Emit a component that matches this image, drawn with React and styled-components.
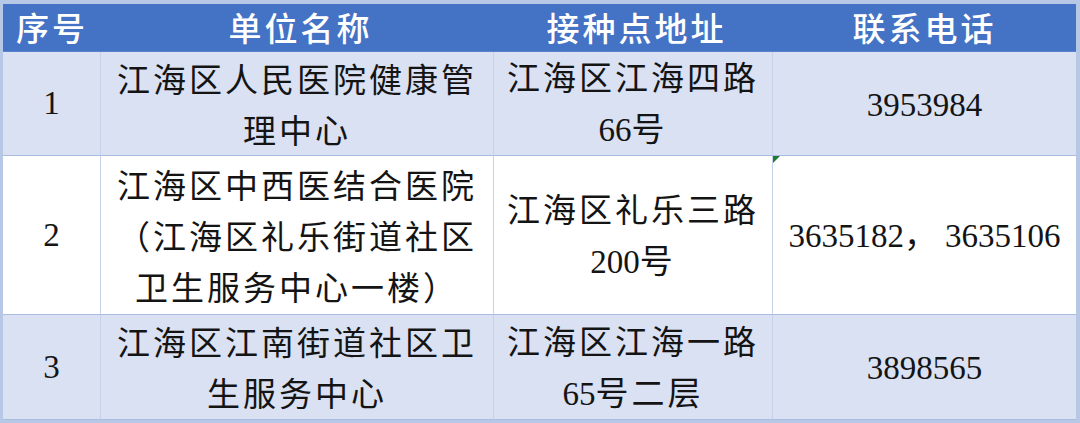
import React from "react";
import styled, { createGlobalStyle } from "styled-components";

const Global = createGlobalStyle`
  html, body { margin: 0; padding: 0; background: #ffffff; }
`;

const Frame = styled.div`
  width: 1080px;
  height: 423px;
  box-sizing: border-box;
  border-style: solid;
  border-color: #b7c8e6;
  border-width: 4px 4px 3px 3px;
  background: #d9e1f2;
  font-family: "Liberation Serif", "Noto Sans CJK SC", serif;
`;

const Table = styled.div`
  display: grid;
  grid-template-columns: 98px 393px 279px 303px;
  grid-template-rows: 48px 104px 159px 105px;
  width: 100%;
  height: 100%;
`;

const HeadCell = styled.div`
  background: #4472c4;
  color: #ffffff;
  display: flex;
  align-items: center;
  justify-content: center;
  font-family: "Noto Sans CJK SC", sans-serif;
  font-size: 33px;
  letter-spacing: 3px;
  font-weight: 500;
  line-height: 1;
  padding-left: ${(p) => p.$shift || 0}px;
  box-sizing: border-box;
  border-bottom: 1px solid #5a83cc;
`;

const Cell = styled.div`
  position: relative;
  box-sizing: border-box;
  background: ${(p) => (p.$white ? "#ffffff" : "#d9e1f2")};
  border-right: ${(p) => (p.$last ? "none" : "1px solid #c6d2ea")};
  border-bottom: 1px solid #a9bbdf;
  display: flex;
  align-items: center;
  justify-content: center;
  text-align: center;
  white-space: nowrap;
  color: #141414;
  font-size: 33px;
  line-height: 51px;
  letter-spacing: 3px;
  font-family: "Noto Sans CJK SC", serif;
`;

const Lines = styled.div`
  display: flex;
  flex-direction: column;
  align-items: center;
  margin-top: ${(p) => p.$dy || 0}px;
`;

const Num = styled.span`
  font-family: "Liberation Serif", serif;
  letter-spacing: 0;
`;

const Comma = styled.span`
  font-family: "Noto Sans CJK SC", sans-serif;
  letter-spacing: 0;
  margin-right: 8px;
`;

const Flag = styled.span`
  position: absolute;
  left: 0;
  top: 0;
  width: 0;
  height: 0;
  border-top: 7px solid #1f7a33;
  border-right: 7px solid transparent;
`;

const rows = [
  {
    no: "1",
    name: ["江海区人民医院健康管", "理中心"],
    addr: [["江海区江海四路"], [<Num key="n">66</Num>, "号"]],
    tel: [<Num key="t">3953984</Num>],
    white: false,
  },
  {
    no: "2",
    name: ["江海区中西医结合医院", "（江海区礼乐街道社区", "卫生服务中心一楼）"],
    addr: [["江海区礼乐三路"], [<Num key="n">200</Num>, "号"]],
    tel: [
      <Num key="a">3635182</Num>,
      <Comma key="c">，</Comma>,
      <Num key="b">3635106</Num>,
    ],
    white: true,
    flag: true,
  },
  {
    no: "3",
    name: ["江海区江南街道社区卫", "生服务中心"],
    addr: [["江海区江海一路"], [<Num key="n">65</Num>, "号二层"]],
    tel: [<Num key="t">3898565</Num>],
    white: false,
  },
];

export default function App() {
  return (
    <>
      <Global />
      <Frame>
        <Table>
          <HeadCell>序号</HeadCell>
          <HeadCell $shift={6}>单位名称</HeadCell>
          <HeadCell $shift={6}>接种点地址</HeadCell>
          <HeadCell>联系电话</HeadCell>
          {rows.map((r) => (
            <React.Fragment key={r.no}>
              <Cell $white={r.white}>
                <Num>{r.no}</Num>
              </Cell>
              <Cell $white={r.white}>
                <Lines>
                  {r.name.map((l, i) => (
                    <div key={i}>{l}</div>
                  ))}
                </Lines>
              </Cell>
              <Cell $white={r.white}>
                <Lines>
                  {r.addr.map((l, i) => (
                    <div key={i}>{l}</div>
                  ))}
                </Lines>
              </Cell>
              <Cell $white={r.white} $last>
                {r.flag && <Flag />}
                <div>{r.tel}</div>
              </Cell>
            </React.Fragment>
          ))}
        </Table>
      </Frame>
    </>
  );
}
